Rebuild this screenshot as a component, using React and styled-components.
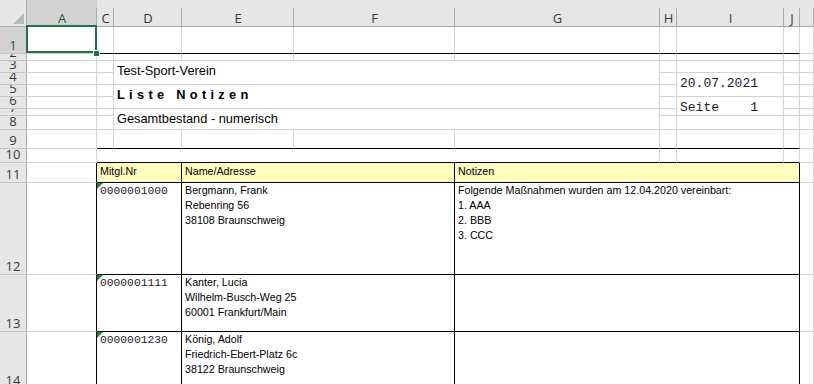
import React from 'react';
import styled, { createGlobalStyle } from 'styled-components';

const GlobalStyle = createGlobalStyle`
  html, body {
    margin: 0;
    padding: 0;
    background: #fff;
    overflow: hidden;
  }
  body {
    font-family: 'Liberation Sans', Arial, sans-serif;
    color: #000;
  }
`;

// sheet geometry (columns B is hidden, K is the partial one at the right edge)
const COLUMNS = ['A', 'C', 'D', 'E', 'F', 'G', 'H', 'I', 'J', ''];
const COL_WIDTHS = [70, 17, 68, 112, 161, 205, 17, 107, 16];
const ROW_HEIGHTS = [27, 7, 12, 12, 12, 12, 7, 14, 19, 14, 20, 92, 57, 57];

const GRID = '#d4d4d4';
const HEAD_LINE = '#ababab';
const EXCEL_GREEN = '#217346';
const HEAD_YELLOW = '#fffcc0';

const MEMBERS = [
  {
    nr: '0000001000',
    address: ['Bergmann, Frank', 'Rebenring 56', '38108 Braunschweig'],
    notes: [
      'Folgende Maßnahmen wurden am 12.04.2020 vereinbart:',
      '1. AAA',
      '2. BBB',
      '3. CCC',
    ],
  },
  {
    nr: '0000001111',
    address: ['Kanter, Lucia', 'Wilhelm-Busch-Weg 25', '60001 Frankfurt/Main'],
    notes: [],
  },
  {
    nr: '0000001230',
    address: ['König, Adolf', 'Friedrich-Ebert-Platz 6c', '38122 Braunschweig'],
    notes: [],
  },
];

const MERGES = [
  { r: 3, c: 3, rs: 2, cs: 4, kind: 'title', text: 'Test-Sport-Verein' },
  { r: 5, c: 3, rs: 2, cs: 4, kind: 'heading', text: 'Liste Notizen' },
  { r: 7, c: 3, rs: 2, cs: 4, kind: 'title', text: 'Gesamtbestand - numerisch' },
  { r: 4, c: 8, rs: 2, cs: 1, kind: 'mono', text: '20.07.2021' },
  { r: 6, c: 8, rs: 2, cs: 1, kind: 'mono', text: 'Seite    1' },
  { r: 10, c: 2, rs: 1, cs: 5 },
  { r: 11, c: 2, rs: 1, cs: 2, kind: 'head', text: 'Mitgl.Nr' },
  { r: 11, c: 4, rs: 1, cs: 2, kind: 'head', text: 'Name/Adresse' },
  { r: 11, c: 6, rs: 1, cs: 4, kind: 'head', text: 'Notizen' },
  ...MEMBERS.flatMap((m, i) => [
    { r: 12 + i, c: 2, rs: 1, cs: 2, kind: 'nr', text: m.nr },
    { r: 12 + i, c: 4, rs: 1, cs: 2, kind: 'lines', lines: m.address },
    { r: 12 + i, c: 6, rs: 1, cs: 4, kind: 'lines', lines: m.notes },
  ]),
];

function layoutCells() {
  const rows = ROW_HEIGHTS.length;
  const cols = COLUMNS.length;
  const taken = new Set();
  const cells = [];

  MERGES.forEach((m) => {
    for (let r = m.r; r < m.r + m.rs; r++)
      for (let c = m.c; c < m.c + m.cs; c++) taken.add(`${r}:${c}`);
    cells.push(m);
  });
  for (let r = 1; r <= rows; r++)
    for (let c = 1; c <= cols; c++)
      if (!taken.has(`${r}:${c}`)) cells.push({ r, c, rs: 1, cs: 1 });

  return cells.map((cell) => {
    const lastCol = cell.c + cell.cs - 1;
    const lastRow = cell.r + cell.rs - 1;
    const inTable = cell.r >= 11 && cell.c >= 2 && lastCol <= 9;
    const ruled = [1, 9, 10].includes(lastRow) && cell.c >= 2 && lastCol <= 9;
    return {
      ...cell,
      bottom: inTable || ruled ? '#000' : null,
      right: inTable || (cell.r >= 11 && cell.c === 1) ? '#000' : null,
      fill: cell.r === 11 && inTable ? HEAD_YELLOW : null,
    };
  });
}

const Sheet = styled.div`
  display: grid;
  grid-template-columns: 27px ${COL_WIDTHS.map((w) => `${w}px`).join(' ')} 1fr;
  grid-template-rows: 27px ${ROW_HEIGHTS.map((h) => `${h}px`).join(' ')};
  width: 814px;
  height: 384px;
  overflow: hidden;
  background: #fff;
`;

const Corner = styled.div`
  position: relative;
  grid-row: 1;
  grid-column: 1;
  box-sizing: border-box;
  background: #e6e6e6;
  border-right: 1px solid ${HEAD_LINE};
  border-bottom: 1px solid ${HEAD_LINE};

  &::after {
    content: '';
    position: absolute;
    right: 2px;
    bottom: 2px;
    border-left: 11px solid transparent;
    border-bottom: 11px solid #b9b9b9;
  }
`;

const ColHead = styled.div`
  position: relative;
  grid-row: 1;
  grid-column: ${(p) => p.$col + 1};
  display: flex;
  align-items: flex-end;
  justify-content: center;
  box-sizing: border-box;
  overflow: hidden;
  background: ${(p) => (p.$selected ? '#d2d2d2' : '#e6e6e6')};
  color: ${(p) => (p.$selected ? '#1c5a36' : '#3a3a3a')};
  border-bottom: 1px solid ${HEAD_LINE};
  font: 13px/16px 'Open Sans', 'Noto Sans', sans-serif;

  &::after {
    content: '';
    position: absolute;
    top: 8px;
    right: 0;
    bottom: 0;
    width: 1px;
    background: ${HEAD_LINE};
  }
`;

const RowHead = styled.div`
  grid-row: ${(p) => p.$row + 1};
  grid-column: 1;
  display: flex;
  align-items: flex-end;
  justify-content: center;
  box-sizing: border-box;
  overflow: hidden;
  background: ${(p) => (p.$selected ? '#d2d2d2' : '#e6e6e6')};
  color: ${(p) => (p.$selected ? '#1c5a36' : '#3a3a3a')};
  border-right: 1px solid ${HEAD_LINE};
  border-bottom: 1px solid #c6c6c6;
  font: 13px/16px 'Open Sans', 'Noto Sans', sans-serif;
`;

const Cell = styled.div`
  position: relative;
  grid-row: ${(p) => p.$row + 1} / span ${(p) => p.$rowSpan};
  grid-column: ${(p) => p.$col + 1} / span ${(p) => p.$colSpan};
  box-sizing: border-box;
  min-width: 0;
  min-height: 0;
  padding: 0 3px;
  background: ${(p) => p.$fill || '#fff'};
  border-right: 1px solid ${(p) => p.$right || GRID};
  border-bottom: 1px solid ${(p) => p.$bottom || GRID};
`;

const ActiveCell = styled(Cell)`
  z-index: 2;

  &::before {
    content: '';
    position: absolute;
    inset: -2px -1px 0 -1px;
    border: 2px solid ${EXCEL_GREEN};
    pointer-events: none;
  }
  &::after {
    content: '';
    position: absolute;
    right: -3px;
    bottom: -3px;
    width: 5px;
    height: 5px;
    background: ${EXCEL_GREEN};
    box-shadow: 0 0 0 1px #fff;
  }
`;

const ReportLine = styled.div`
  padding-top: 2px;
  font-family: 'Liberation Sans', Arial, sans-serif;
  font-size: 12.8px;
  line-height: 15px;
  font-weight: ${(p) => (p.$bold ? 700 : 400)};
  letter-spacing: ${(p) => (p.$spaced ? '4.3px' : 'normal')};
  white-space: nowrap;
`;

const MonoLine = styled.div`
  padding-top: ${(p) => p.$top}px;
  font-family: 'Liberation Mono', 'Courier New', monospace;
  font-size: ${(p) => p.$size}px;
  line-height: 15px;
  white-space: pre;
  color: #1b1b2a;
`;

const ColumnTitle = styled.div`
  padding-top: 2px;
  font-family: 'Liberation Sans', Arial, sans-serif;
  font-size: 10.7px;
  line-height: 13px;
  white-space: nowrap;
`;

const EntryLine = styled.div`
  font-family: 'Liberation Sans', Arial, sans-serif;
  font-size: 10.7px;
  line-height: 15px;
  white-space: nowrap;
`;

const ErrorFlag = styled.span`
  position: absolute;
  top: 0;
  left: 0;
  width: 0;
  height: 0;
  border-top: 6px solid #23803a;
  border-right: 6px solid transparent;
`;

function CellContent({ cell }) {
  switch (cell.kind) {
    case 'title':
      return <ReportLine>{cell.text}</ReportLine>;
    case 'heading':
      return (
        <ReportLine $bold $spaced>
          {cell.text}
        </ReportLine>
      );
    case 'mono':
      return (
        <MonoLine $size={13} $top={3}>
          {cell.text}
        </MonoLine>
      );
    case 'head':
      return <ColumnTitle>{cell.text}</ColumnTitle>;
    case 'nr':
      return (
        <>
          <ErrorFlag />
          <MonoLine $size={11.3} $top={1}>
            {cell.text}
          </MonoLine>
        </>
      );
    case 'lines':
      return cell.lines.map((line) => <EntryLine key={line}>{line}</EntryLine>);
    default:
      return null;
  }
}

export default function App() {
  const cells = layoutCells();

  return (
    <>
      <GlobalStyle />
      <Sheet>
        <Corner />
        {COLUMNS.map((name, i) => (
          <ColHead key={`col-${i}`} $col={i + 1} $selected={name === 'A'}>
            {name}
          </ColHead>
        ))}
        {ROW_HEIGHTS.map((_, i) => (
          <RowHead key={`row-${i}`} $row={i + 1} $selected={i === 0}>
            {i + 1}
          </RowHead>
        ))}
        {cells.map((cell) => {
          const Box = cell.r === 1 && cell.c === 1 ? ActiveCell : Cell;
          return (
            <Box
              key={`${cell.r}:${cell.c}`}
              $row={cell.r}
              $col={cell.c}
              $rowSpan={cell.rs}
              $colSpan={cell.cs}
              $bottom={cell.bottom}
              $right={cell.right}
              $fill={cell.fill}
            >
              <CellContent cell={cell} />
            </Box>
          );
        })}
      </Sheet>
    </>
  );
}
